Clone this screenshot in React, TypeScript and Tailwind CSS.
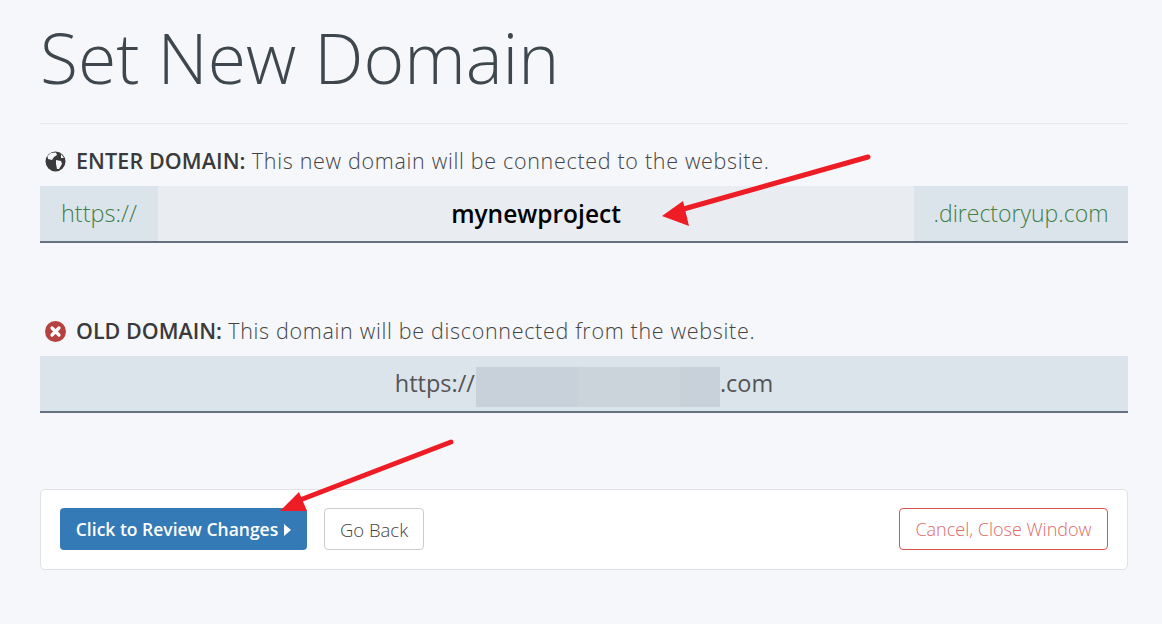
function Arrows() {
  return (
    <svg className="absolute top-0 left-0 pointer-events-none" width="1162" height="624" viewBox="0 0 1162 624">
      <path d="M868 157 L680 210" stroke="#ee1c25" strokeWidth="5" strokeLinecap="round" fill="none" />
      <polygon points="662,216 683,201 689,226" fill="#ee1c25" />
      <path d="M451 442 L300 500" stroke="#ee1c25" strokeWidth="5" strokeLinecap="round" fill="none" />
      <polygon points="280,511 299,492 307,511" fill="#ee1c25" />
    </svg>
  );
}

export default function App() {
  return (
    <div className="relative w-[1162px] h-[624px] overflow-hidden bg-[#f5f7fb] font-['Open_Sans','Noto_Sans',sans-serif] text-[#444]">
      <div className="pl-10 pr-[34px]">
        <h1 className="h-[124px] pt-[15px] border-b border-[#e9ebee] text-[69.6px] leading-[84px] font-light text-[#3f474e]">
          Set New Domain
        </h1>

        <div className="mt-[24px] h-[26px] pl-[5px] flex items-center gap-[10px]">
          <svg width="21" height="21" viewBox="0 0 21 21">
            <circle cx="10.5" cy="10.5" r="10" fill="#3a3a3a" />
            <path d="M6 2 L11 1.5 L12 4 L9 6 L7 9 L3 8 L2.5 5 Z M11 9 L16 10 L17 13 L14 18 L12 18 L11 13 Z M16 3 L19 7 L16 7 Z" fill="#f5f7fb" />
          </svg>
          <p className="font-light whitespace-nowrap text-[21.5px] tracking-[0.68px]">
            <span className="font-semibold text-[#3a3a3a] tracking-[0.1px]">ENTER DOMAIN:</span> This new domain will be connected to the website.
          </p>
        </div>
        <div className="mt-[12px] h-[57px] flex border-b-2 border-[#667180] bg-[#e9edf2]">
          <div className="w-[118px] flex items-center justify-center bg-[#dce4eb] text-[#3f8047] font-light text-[23.5px]">https://</div>
          <div className="flex-1 pt-px flex items-center justify-center font-semibold text-black text-[24.5px]">mynewproject</div>
          <div className="w-[214px] flex items-center justify-center bg-[#dce4eb] text-[#3f8047] font-light text-[23px]">.directoryup.com</div>
        </div>

        <div className="mt-[75px] h-[26px] pl-[5px] flex items-center gap-[10px]">
          <svg width="21" height="21" viewBox="0 0 21 21">
            <circle cx="10.5" cy="10.5" r="10.5" fill="#b54242" />
            <path d="M7 7 L14 14 M14 7 L7 14" stroke="#fff" strokeWidth="3.2" strokeLinecap="round" />
          </svg>
          <p className="font-light whitespace-nowrap text-[21.5px] tracking-[0.68px]">
            <span className="font-semibold text-[#3a3a3a] tracking-normal">OLD DOMAIN:</span> This domain will be disconnected from the website.
          </p>
        </div>
        <div className="mt-[12px] h-[57px] flex items-center justify-center border-b-2 border-[#667180] bg-[#dce4eb] text-[23.5px] text-[#555]">
          <span>https://</span>
          {/* blurred-out part of the address */}
          <span className="w-[244px] h-[40px] self-start mt-[11px] ml-px flex">
            <span className="w-[102px] bg-[#c8d0d9]" />
            <span className="w-[102px] bg-[#cbd3db]" />
            <span className="w-[40px] bg-[#c8d0d9]" />
          </span>
          <span>.com</span>
        </div>

        <div className="mt-[76px] h-[81px] flex items-center justify-between px-[19px] pb-px bg-white border border-[#dfe1e4] rounded-[5px]">
          <div className="flex items-center gap-[17px]">
            <button className="h-[42px] w-[247px] pt-px rounded-[4px] bg-[#337ab7] text-white text-[17.5px] font-semibold flex items-center justify-center gap-[6px]">
              Click to Review Changes
              <svg width="7" height="12" viewBox="0 0 7 12"><path d="M0 0 L7 6 L0 12 Z" fill="#fff" /></svg>
            </button>
            <button className="h-[42px] w-[100px] pt-px rounded-[4px] bg-white border border-[#cccccc] text-[#444] text-[18.5px] font-light">Go Back</button>
          </div>
          <button className="h-[42px] w-[209px] pt-px rounded-[4px] bg-white border border-[#d9534f] text-[#e06a67] text-[18px] font-light">
            Cancel, Close Window
          </button>
        </div>
      </div>
      <Arrows />
    </div>
  );
}
